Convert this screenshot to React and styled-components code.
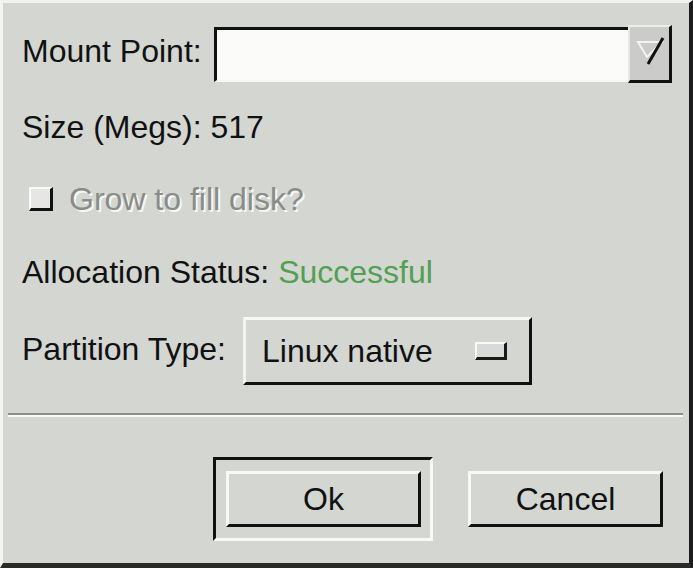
import React from 'react';
import styled, { createGlobalStyle } from 'styled-components';

const GlobalStyle = createGlobalStyle`
  html, body {
    margin: 0;
    padding: 0;
    background: #d4d6d2;
  }
  * {
    box-sizing: border-box;
  }
`;

const Window = styled.div`
  width: 693px;
  height: 568px;
  display: flex;
  flex-direction: column;
  background: #d4d6d2;
  border-top: 3px solid #f2f3f1;
  border-left: 3px solid #f4f5f3;
  border-right: 4px solid #1c1c1c;
  border-bottom: 5px solid #2a2a2a;
  font-family: 'Liberation Sans', Arial, sans-serif;
  font-size: 32px;
  line-height: 36px;
  color: #111;
`;

const Body = styled.div`
  display: flex;
  flex-direction: column;
  padding: 0 17px 0 19px;
`;

const Row = styled.div`
  display: flex;
  align-items: center;
  margin-top: ${p => p.$top}px;
  height: ${p => p.$height || 36}px;
  gap: ${p => p.$gap || 0}px;
`;

const Label = styled.span`
  white-space: nowrap;
  margin-bottom: ${p => p.$lift || 0}px;
`;

const Combo = styled.div`
  flex: 1;
  min-width: 0;
  display: flex;
  height: 58px;
  margin-top: -2px;
  margin-left: 12px;
`;

const Entry = styled.input`
  flex: 1;
  width: 0;
  min-width: 0;
  margin: 2px 0 1px;
  border: none;
  border-top: 3px solid #111;
  border-left: 3px solid #111;
  border-bottom: 2px solid #f7f7f5;
  background: #fbfbfa;
  outline: none;
  font: inherit;
  padding: 0 8px;
`;

const ArrowButton = styled.div`
  width: 44px;
  flex: none;
  display: flex;
  align-items: center;
  justify-content: center;
  background: #cbccc9;
  border-top: 2px solid #ecedeb;
  border-left: 2px solid #e6e7e5;
  border-right: 3px solid #111;
  border-bottom: 3px solid #111;
`;

const Muted = styled.span`
  color: #8a8c88;
  text-shadow: 2px 2px 0 #f6f7f5;
`;

const Good = styled.span`
  color: #52a052;
`;

const CheckBox = styled.span`
  width: 24px;
  height: 24px;
  margin-left: 7px;
  background: #e6e7e4;
  border-top: 2px solid #fafafa;
  border-left: 2px solid #fafafa;
  border-right: 3px solid #111;
  border-bottom: 3px solid #111;
`;

const OptionMenu = styled.div`
  width: 289px;
  height: 68px;
  display: flex;
  align-items: center;
  justify-content: space-between;
  padding: 0 22px 0 16px;
  margin-left: 17px;
  background: #d4d6d2;
  border-top: 3px solid #f8f8f7;
  border-left: 3px solid #f2f3f1;
  border-right: 3px solid #111;
  border-bottom: 3px solid #111;
`;

const Indicator = styled.span`
  width: 32px;
  height: 18px;
  background: #d9dad7;
  border-top: 2px solid #fafafa;
  border-left: 2px solid #fafafa;
  border-right: 3px solid #1a1a1a;
  border-bottom: 3px solid #1a1a1a;
`;

const Separator = styled.div`
  margin: 28px 6px 0 5px;
  height: 4px;
  border-top: 2px solid #8c8e8a;
  border-bottom: 2px solid #fafbf9;
`;

const Actions = styled.div`
  display: flex;
  align-items: center;
  justify-content: flex-end;
  gap: 35px;
  margin-top: 40px;
  padding-right: 26px;
`;

const DefaultFrame = styled.div`
  width: 220px;
  height: 84px;
  padding: 11px 9px 11px 10px;
  border-top: 3px solid #111;
  border-left: 3px solid #111;
  border-right: 3px solid #f8f8f7;
  border-bottom: 3px solid #f8f8f7;
`;

const Button = styled.button`
  width: 195px;
  height: 56px;
  display: flex;
  align-items: center;
  justify-content: center;
  padding: 0;
  background: #d4d6d2;
  font: inherit;
  color: #111;
  border-top: 3px solid #f8f8f7;
  border-left: 3px solid #f8f8f7;
  border-right: 3px solid #111;
  border-bottom: 3px solid #111;
  border-radius: 0;
`;

const ComboArrow = () => (
  <svg width="30" height="36" viewBox="0 0 30 36">
    <polygon points="3,6 27,6 12,21" fill="none" stroke="#f3f3f1" strokeWidth="2" />
    <line x1="13" y1="28" x2="28" y2="2" stroke="#111" strokeWidth="3" />
  </svg>
);

export default function App() {
  return (
    <>
      <GlobalStyle />
      <Window>
        <Body>
          <Row $top={25} $height={54}>
            <Label $lift={8}>Mount Point:</Label>
            <Combo>
              <Entry readOnly value="" />
              <ArrowButton>
                <ComboArrow />
              </ArrowButton>
            </Combo>
          </Row>
          <Row $top={27}>
            <Label>Size (Megs): 517</Label>
          </Row>
          <Row $top={36} $gap={16}>
            <CheckBox />
            <Muted>Grow to fill disk?</Muted>
          </Row>
          <Row $top={37}>
            <Label>
              Allocation Status: <Good>Successful</Good>
            </Label>
          </Row>
          <Row $top={27} $height={68}>
            <Label $lift={4}>Partition Type:</Label>
            <OptionMenu>
              <span>Linux native</span>
              <Indicator />
            </OptionMenu>
          </Row>
        </Body>
        <Separator />
        <Actions>
          <DefaultFrame>
            <Button>Ok</Button>
          </DefaultFrame>
          <Button>Cancel</Button>
        </Actions>
      </Window>
    </>
  );
}
